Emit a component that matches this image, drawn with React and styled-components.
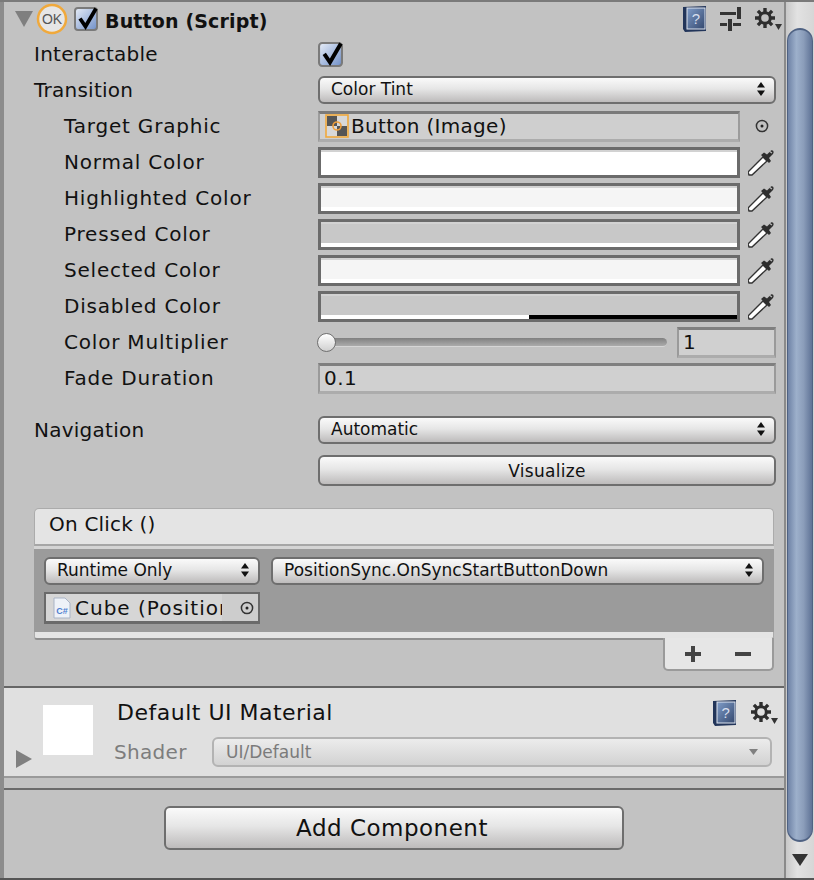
import React from 'react'
import styled, { createGlobalStyle } from 'styled-components'

const GlobalStyle = createGlobalStyle`
  html, body {
    margin: 0;
    padding: 0;
    background: #c2c2c2;
  }
  * {
    box-sizing: border-box;
  }
`;

const Page = styled.div`
  width: 814px;
  height: 880px;
  display: flex;
  overflow: hidden;
  background: #c2c2c2;
  color: #111;
  font-family: "DejaVu Sans", "Liberation Sans", sans-serif;
  font-size: 20px;
  border-top: 2px solid #7a7a7a;
  border-bottom: 2px solid #555;
`;

const Main = styled.div`
  width: 786px;
  display: flex;
  flex-direction: column;
  border-left: 4px solid #8c8c8c;
  border-right: 2px solid #8a8a8a;
`;

const Header = styled.div`
  height: 34px;
  display: flex;
  align-items: center;
  gap: 3px;
  padding-left: 11px;
`;

const HeaderCheck = styled.div`
  display: flex;
  margin-left: 3px;
`;

const Title = styled.span`
  font-weight: 700;
  font-size: 19px;
  letter-spacing: 0.15px;
  margin: 3px 0 0 4px;
  flex: 1;
`;

const HeaderIcons = styled.div`
  display: flex;
  align-items: center;
  gap: ${(p) => p.$gap || 12}px;
  padding-right: ${(p) => p.$right || 2}px;
`;

const Rows = styled.div`
  padding-left: 30px;
  display: flex;
  flex-direction: column;
`;

const Row = styled.div`
  height: 36px;
  display: grid;
  grid-template-columns: 284px 1fr;
  align-items: center;
  padding-right: 8px;
  margin-top: ${(p) => p.$top || 0}px;
`;

const Label = styled.div`
  padding-left: ${(p) => (p.$indent ? 30 : 0)}px;
  letter-spacing: ${(p) => (p.$indent ? 0.8 : 0.25)}px;
  white-space: nowrap;
`;

const FieldLine = styled.div`
  display: flex;
  align-items: center;
  gap: 8px;
`;

const Select = styled.div`
  height: 28px;
  flex: ${(p) => p.$flex || 1};
  display: flex;
  align-items: center;
  justify-content: space-between;
  padding: 0 8px 2px 11px;
  font-size: 17px;
  border: 2px solid #6e6e6e;
  border-radius: 6px;
  background: linear-gradient(#fafafa, #e6e6e6 45%, #bdbbbb);
  white-space: nowrap;
`;

const ObjectField = styled.div`
  height: 31px;
  width: 422px;
  display: flex;
  align-items: center;
  gap: 2px;
  padding-left: 5px;
  letter-spacing: 0.3px;
  background: #cfcfcf;
  border: 2px solid #9c9c9c;
  border-top: 3px solid #7a7a7a;
  border-bottom: 3px solid #acacac;
`;

const PickerSlot = styled.div`
  width: 28px;
  display: flex;
  justify-content: center;
`;

const Swatch = styled.div`
  width: 422px;
  height: 31px;
  display: flex;
  flex-direction: column;
  border: 3px solid #6b6b6b;
  background: ${(p) => p.$color};
`;

const SwatchFill = styled.div`
  flex: 1;
  background: ${(p) => p.$color};
  border-top: 2px solid #d2d2d2;
`;

const AlphaBar = styled.div`
  height: 4px;
  background: ${(p) => (p.$split ? 'linear-gradient(90deg, #fff 50%, #000 50%)' : '#fff')};
`;

const SliderField = styled.div`
  display: flex;
  align-items: center;
  gap: 10px;
`;

const Track = styled.div`
  position: relative;
  flex: 1;
  height: 9px;
  border-radius: 5px;
  background: linear-gradient(#808080, #ababab);
  border-bottom: 1px solid #d6d6d6;
`;

const Thumb = styled.div`
  position: absolute;
  left: -1px;
  top: -5px;
  width: 19px;
  height: 19px;
  border-radius: 50%;
  border: 1px solid #6f6f6f;
  background: linear-gradient(#fff, #d0d0d0);
`;

const NumberField = styled.div`
  width: ${(p) => (p.$wide ? '100%' : '99px')};
  height: 31px;
  display: flex;
  align-items: center;
  padding-left: 4px;
  letter-spacing: 0.5px;
  background: #d0d0d0;
  border: 2px solid #9a9a9a;
  border-top: 3px solid #7f7f7f;
  border-bottom: 3px solid #acacac;
`;

const VisualizeRow = styled.div`
  padding: 7px 8px 0 284px;
`;

const PushButton = styled.div`
  height: ${(p) => p.$h}px;
  display: flex;
  align-items: center;
  justify-content: center;
  border: 2px solid #6e6e6e;
  border-radius: 6px;
  background: linear-gradient(#fafafa, #e6e6e6 45%, #bdbbbb);
  font-size: ${(p) => p.$size}px;
  letter-spacing: ${(p) => p.$spacing}px;
`;

const EventBox = styled.div`
  width: 740px;
  margin-top: 22px;
  display: flex;
  flex-direction: column;
`;

const EventHeader = styled.div`
  height: 38px;
  display: flex;
  align-items: center;
  padding: 0 0 5px 14px;
  letter-spacing: 0.2px;
  background: #e4e4e4;
  border-radius: 5px 5px 0 0;
  border-top: 1px solid #ababab;
  border-left: 1px solid #ababab;
  border-right: 1px solid #ababab;
  border-bottom: 2px solid #a6a6a6;
`;

const EventBody = styled.div`
  height: 86px;
  padding: 8px 10px 0 10px;
  background: #9b9b9b;
  border-top: 3px solid #d4d4d4;
`;

const EventLine = styled.div`
  display: flex;
  gap: 11px;
`;

const ObjectSlot = styled.div`
  width: 216px;
  height: 32px;
  margin-top: 7px;
  display: flex;
  border: 2px solid #6a6a6a;
  border-bottom-width: 3px;
`;

const ObjectName = styled.div`
  width: 176px;
  flex-shrink: 0;
  display: flex;
  align-items: center;
  gap: 4px;
  padding-left: 7px;
  overflow: hidden;
  white-space: nowrap;
  letter-spacing: 1px;
  background: #d6d6d6;

  svg {
    flex-shrink: 0;
  }
`;

const ObjectPick = styled.div`
  flex: 1;
  display: flex;
  align-items: center;
  justify-content: center;
  padding-left: 14px;
  background: #cdcdcd;
`;

const EventBottom = styled.div`
  height: 8px;
  background: #e4e4e4;
  border-left: 1px solid #ababab;
  border-right: 1px solid #ababab;
  border-bottom: 2px solid #8f8f8f;
  border-radius: 0 0 3px 3px;
`;

const Footer = styled.div`
  align-self: flex-end;
  width: 111px;
  height: 33px;
  margin-top: -2px;
  display: flex;
  align-items: center;
  justify-content: space-between;
  padding: 0 20px 0 19px;
  background: #e6e6e6;
  border: 2px solid #9a9a9a;
  border-top: none;
  border-radius: 0 0 5px 5px;
`;

const Material = styled.div`
  height: 92px;
  margin-top: 15px;
  display: flex;
  background: #e0e0e0;
  border-top: 2px solid #666;
  border-bottom: 2px solid #9a9a9a;
`;

const PreviewColumn = styled.div`
  width: 110px;
  display: flex;
`;

const Fold = styled.div`
  width: 39px;
  padding: 61px 0 0 12px;
`;

const Preview = styled.div`
  width: 50px;
  height: 50px;
  margin-top: 17px;
  background: #fff;
`;

const MaterialInfo = styled.div`
  flex: 1;
  display: flex;
  flex-direction: column;
`;

const MaterialTitle = styled.div`
  height: 49px;
  display: flex;
  align-items: center;
  justify-content: space-between;
  font-size: 22px;
  letter-spacing: 0.5px;
  padding: 0 4px 0 3px;
`;

const ShaderLine = styled.div`
  display: flex;
  align-items: center;
`;

const ShaderLabel = styled.div`
  width: 98px;
  letter-spacing: 0.3px;
  color: #7d7d7d;
`;

const ShaderSelect = styled.div`
  width: 560px;
  height: 30px;
  display: flex;
  align-items: center;
  justify-content: space-between;
  padding: 0 12px;
  color: #7b7b7b;
  font-size: 17px;
  border: 2px solid #b3b3b3;
  border-radius: 6px;
  background: linear-gradient(#ececec, #d2d2d2);
`;

const AddArea = styled.div`
  margin-top: 10px;
  flex: 1;
  padding-top: 16px;
  border-top: 2px solid #6a6a6a;
  display: flex;
  justify-content: center;
`;

const AddButton = styled(PushButton)`
  width: 460px;
  padding-right: 4px;
`;

const Scrollbar = styled.div`
  width: 28px;
  display: flex;
  flex-direction: column;
  align-items: center;
  background: linear-gradient(90deg, #c8c8c8, #e2e2e2 40%, #d6d6d6);
`;

const ScrollThumb = styled.div`
  width: 26px;
  height: 814px;
  margin-top: 26px;
  border-radius: 13px;
  border: 1px solid #4f6283;
  border-width: 2px 1px;
  background: linear-gradient(90deg, #6f83a6, #9db0cb 35%, #8b9dba 65%, #5f7396);
`;

const ScrollArrow = styled.svg`
  margin-top: 12px;
`;

const Updown = () => (
  <svg width="10" height="14" viewBox="0 0 10 14">
    <path d="M5 0 9 5.500H1zM5 14 1 8.500h8z" fill="#111" />
  </svg>
);

const FoldDown = () => (
  <svg width="18" height="16" viewBox="0 0 18 16">
    <path d="M0 0h18L9 16z" fill="#7f7f7f" />
  </svg>
);

const FoldRight = () => (
  <svg width="16" height="18" viewBox="0 0 16 18">
    <path d="M0 0 16 9 0 18z" fill="#808080" />
  </svg>
);

const OkIcon = () => (
  <svg width="32" height="32" viewBox="0 0 32 32">
    <circle cx="16" cy="16" r="14" fill="#e6e6e6" stroke="#f0a93c" strokeWidth="2.500" />
    <text x="16" y="21" textAnchor="middle" fontSize="14" fill="#555" fontFamily="Liberation Sans, sans-serif">OK</text>
  </svg>
);

const Check = ({ size }) => (
  <svg width={size} height={size} viewBox="0 0 24 24" overflow="visible">
    <defs>
      <linearGradient id="chk" x1="0" y1="0" x2="1" y2="1">
        <stop offset="0" stopColor="#e8eef8" />
        <stop offset="1" stopColor="#6f8fc8" />
      </linearGradient>
    </defs>
    <rect x="1" y="1" width="22" height="22" rx="3" fill="url(#chk)" stroke="#7a7a7a" strokeWidth="2" />
    <path d="M6 11.500l5.500 8L22 1.500" fill="none" stroke="#000" strokeWidth="3.800" />
  </svg>
);

const HelpIcon = () => (
  <svg width="26" height="28" viewBox="0 0 26 28">
    <defs>
      <linearGradient id="hlp" x1="0" y1="0" x2="1" y2="1">
        <stop offset="0" stopColor="#7f9cc8" />
        <stop offset="1" stopColor="#34486e" />
      </linearGradient>
    </defs>
    <path d="M1 2 24 1v25L3 27 1 24z" fill="#22355a" />
    <rect x="5" y="3" width="18" height="21" fill="url(#hlp)" stroke="#dfe6f0" strokeWidth="1" />
    <text x="14" y="19" textAnchor="middle" fontSize="15" fill="#d6deee" fontFamily="Liberation Sans, sans-serif">?</text>
  </svg>
);

const SlidersIcon = () => (
  <svg width="22" height="24" viewBox="0 0 22 24">
    <path d="M0 5h16v3H0zM17 0h4v12h-4zM0 16h7v3H0zM8 12h4v12H8zM13 16h8v3h-8z" fill="#333" />
  </svg>
);

const GearIcon = () => (
  <svg width="28" height="26" viewBox="0 0 28 26">
    <g stroke="#2e2e2e" strokeWidth="3.400">
      <path d="M11 2v5M11 17v5M1 12h5M16 12h5M3.900 4.900l3.500 3.500M14.600 15.600l3.500 3.500M18.100 4.900l-3.500 3.500M7.400 15.600l-3.500 3.500" />
    </g>
    <circle cx="11" cy="12" r="5.300" fill="none" stroke="#2e2e2e" strokeWidth="3" />
    <path d="M21 18h7l-3.500 6z" fill="#333" />
  </svg>
);

const Picker = () => (
  <svg width="14" height="14" viewBox="0 0 14 14">
    <circle cx="7" cy="7" r="5.600" fill="none" stroke="#333" strokeWidth="1.500" />
    <circle cx="7" cy="7" r="1.500" fill="#222" />
  </svg>
);

const Dropper = () => (
  <svg width="30" height="30" viewBox="2 0 30 30">
    <path d="M3 28 2 25 17 10l4 4L6 28z" fill="#fff" stroke="#333" strokeWidth="1.400" />
    <path d="M15 8l8 8 2-2-2-3 4-4c1.500-2 0-4.500-2-3.500l-4 4-3-2z" fill="#2e2e2e" />
    <path d="M23 4l3 2" stroke="#bbb" strokeWidth="1.200" />
  </svg>
);

const ImageIcon = () => (
  <svg width="24" height="24" viewBox="0 0 24 24">
    <rect x="1" y="1" width="22" height="22" fill="#d8d8d8" stroke="#f0a93c" strokeWidth="1.600" />
    <path d="M2 2h10v10H2zM12 12h10v10H12z" fill="#555" />
    <circle cx="12" cy="12" r="4" fill="none" stroke="#f0a03c" strokeWidth="1.600" />
  </svg>
);

const ScriptIcon = () => (
  <svg width="18" height="22" viewBox="0 0 18 22">
    <path d="M1 1h11l5 5v15H1z" fill="#eef2f8" stroke="#a9b4c6" />
    <text x="9" y="17" textAnchor="middle" fontSize="9" fontWeight="700" letterSpacing="0" fill="#4f7fd0" fontFamily="Liberation Sans, sans-serif">C#</text>
  </svg>
);

const colors = [
  { label: 'Normal Color', fill: '#ffffff', base: '#ffffff' },
  { label: 'Highlighted Color', fill: '#f5f5f5', base: '#ffffff' },
  { label: 'Pressed Color', fill: '#c8c8c8', base: '#c8c8c8' },
  { label: 'Selected Color', fill: '#f5f5f5', base: '#ffffff' },
  { label: 'Disabled Color', fill: '#c8c8c8', base: '#c8c8c8', split: true },
];

const App = () => {
  return (
    <>
      <GlobalStyle />
      <Page>
        <Main>
          <Header>
            <FoldDown />
            <OkIcon />
            <HeaderCheck><Check size={24} /></HeaderCheck>
            <Title>Button (Script)</Title>
            <HeaderIcons>
              <HelpIcon />
              <SlidersIcon />
              <GearIcon />
            </HeaderIcons>
          </Header>
          <Rows>
            <Row>
              <Label>Interactable</Label>
              <Check size={25} />
            </Row>
            <Row>
              <Label>Transition</Label>
              <FieldLine>
                <Select>Color Tint<Updown /></Select>
              </FieldLine>
            </Row>
            <Row>
              <Label $indent>Target Graphic</Label>
              <FieldLine>
                <ObjectField><ImageIcon />Button (Image)</ObjectField>
                <PickerSlot><Picker /></PickerSlot>
              </FieldLine>
            </Row>
            {colors.map((c) => (
              <Row key={c.label}>
                <Label $indent>{c.label}</Label>
                <FieldLine>
                  <Swatch $color={c.base}>
                    <SwatchFill $color={c.fill} />
                    <AlphaBar $split={c.split} />
                  </Swatch>
                  <Dropper />
                </FieldLine>
              </Row>
            ))}
            <Row>
              <Label $indent>Color Multiplier</Label>
              <SliderField>
                <Track><Thumb /></Track>
                <NumberField>1</NumberField>
              </SliderField>
            </Row>
            <Row>
              <Label $indent>Fade Duration</Label>
              <NumberField $wide>0.1</NumberField>
            </Row>
            <Row $top={16}>
              <Label>Navigation</Label>
              <FieldLine>
                <Select>Automatic<Updown /></Select>
              </FieldLine>
            </Row>
            <VisualizeRow>
              <PushButton $h={31} $size={17} $spacing={0.3}>Visualize</PushButton>
            </VisualizeRow>
            <EventBox>
              <EventHeader>On Click ()</EventHeader>
              <EventBody>
                <EventLine>
                  <Select $flex="0 0 216px">Runtime Only<Updown /></Select>
                  <Select>PositionSync.OnSyncStartButtonDown<Updown /></Select>
                </EventLine>
                <ObjectSlot>
                  <ObjectName><ScriptIcon />Cube (Position</ObjectName>
                  <ObjectPick><Picker /></ObjectPick>
                </ObjectSlot>
              </EventBody>
              <EventBottom />
              <Footer>
                <svg width="18" height="18" viewBox="0 0 18 18"><path d="M7 1h4v6h6v4h-6v6H7v-6H1V7h6z" fill="#444" /></svg>
                <svg width="18" height="18" viewBox="0 0 18 18"><path d="M1 7h16v4H1z" fill="#444" /></svg>
              </Footer>
            </EventBox>
          </Rows>
          <Material>
            <PreviewColumn>
              <Fold><FoldRight /></Fold>
              <Preview />
            </PreviewColumn>
            <MaterialInfo>
              <MaterialTitle>
                Default UI Material
                <HeaderIcons $gap={12}>
                  <HelpIcon />
                  <GearIcon />
                </HeaderIcons>
              </MaterialTitle>
              <ShaderLine>
                <ShaderLabel>Shader</ShaderLabel>
                <ShaderSelect>
                  UI/Default
                  <svg width="9" height="6" viewBox="0 0 12 8"><path d="M0 0h12L6 8z" fill="#808080" /></svg>
                </ShaderSelect>
              </ShaderLine>
            </MaterialInfo>
          </Material>
          <AddArea>
            <AddButton $h={44} $size={23} $spacing={0.5}>Add Component</AddButton>
          </AddArea>
        </Main>
        <Scrollbar>
          <ScrollThumb />
          <ScrollArrow width="16" height="12" viewBox="0 0 16 12">
            <path d="M0 0h16L8 12z" fill="#333" />
          </ScrollArrow>
        </Scrollbar>
      </Page>
    </>
  )
}

export default App
